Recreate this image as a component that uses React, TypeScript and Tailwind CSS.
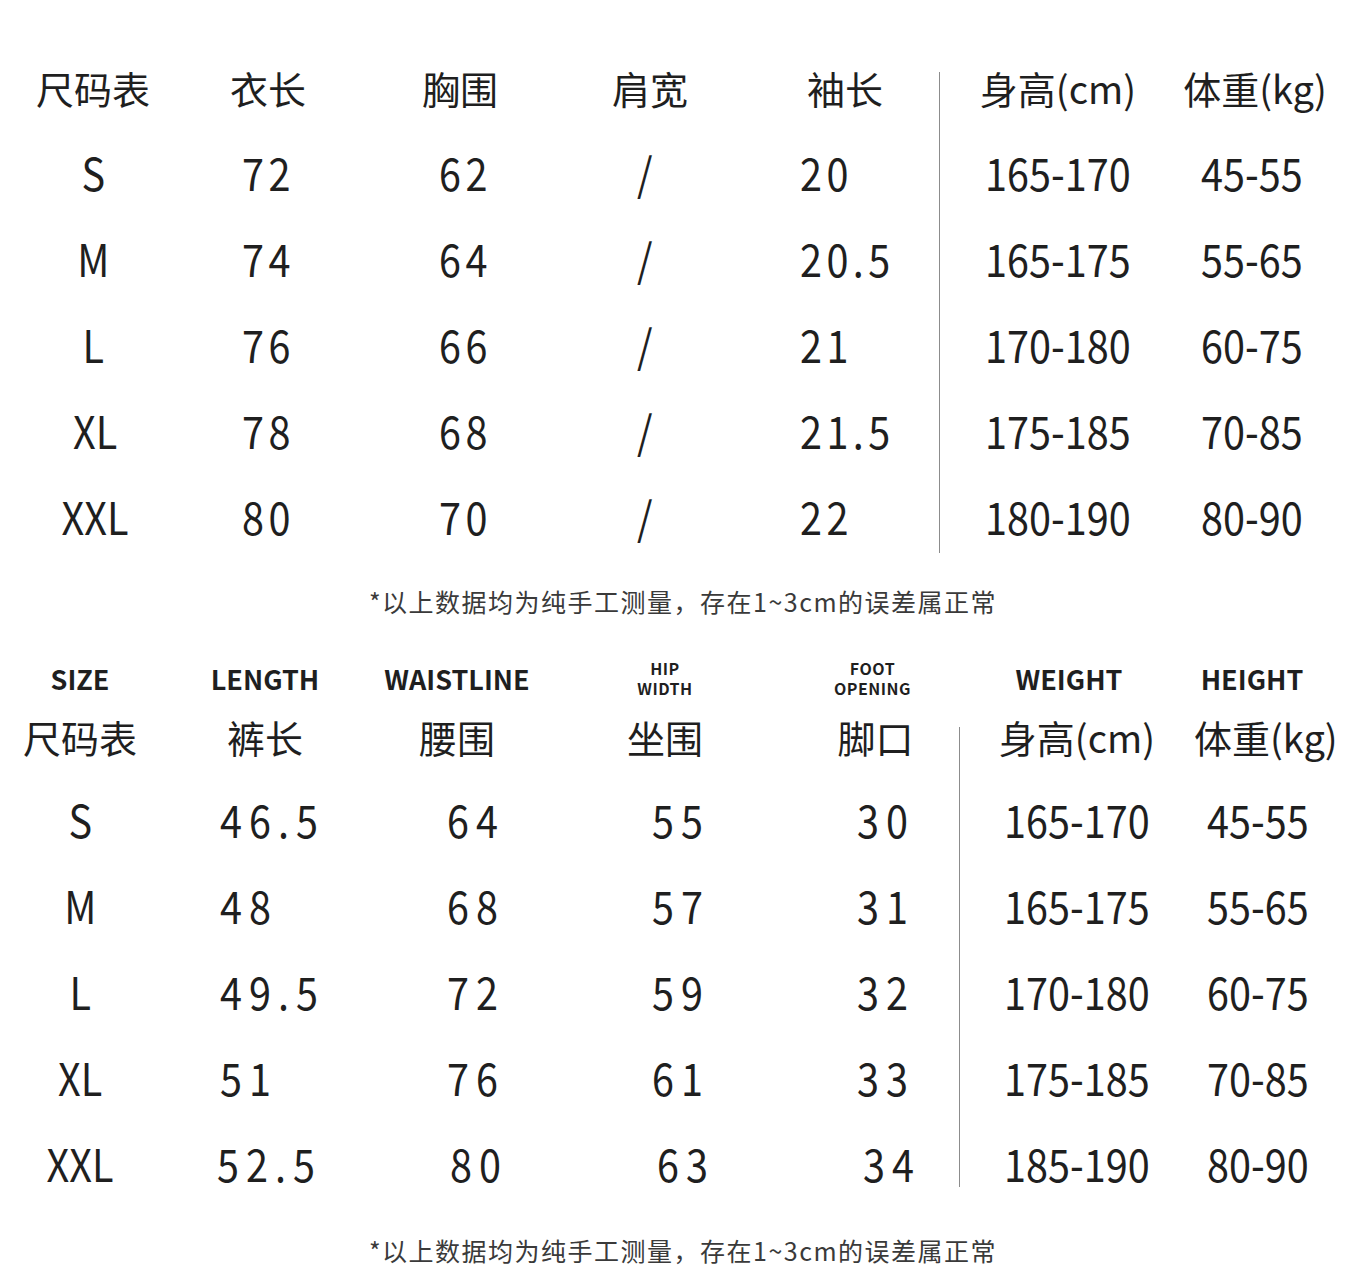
const topRows = [
  ['S', '72', '62', '/', '20', '165-170', '45-55'],
  ['M', '74', '64', '/', '20.5', '165-175', '55-65'],
  ['L', '76', '66', '/', '21', '170-180', '60-75'],
  ['XL', '78', '68', '/', '21.5', '175-185', '70-85'],
  ['XXL', '80', '70', '/', '22', '180-190', '80-90'],
];

const bottomRows = [
  ['S', '46.5', '64', '55', '30', '165-170', '45-55'],
  ['M', '48', '68', '57', '31', '165-175', '55-65'],
  ['L', '49.5', '72', '59', '32', '170-180', '60-75'],
  ['XL', '51', '76', '61', '33', '175-185', '70-85'],
  ['XXL', '52.5', '80', '63', '34', '185-190', '80-90'],
];

// the chart's figures are tall and condensed: squeeze them horizontally
function Fig({ children, center }: { children: string; center?: boolean }) {
  return (
    <span className={`inline-block scale-x-[0.88] ${center ? 'origin-center' : 'origin-left'}`}>
      {children}
    </span>
  );
}

function Note() {
  return (
    <div className="flex h-[40px] items-center justify-center text-[25px] leading-none tracking-[1.5px] text-[#3a3a3a]">
      *以上数据均为纯手工测量，存在1~3cm的误差属正常
    </div>
  );
}

function TopTable() {
  return (
    <div className="flex pt-[48px]">
      {/* left block: size + garment measurements */}
      <div className="w-[939px]">
        <div className="flex h-[80px] items-center text-[38px] leading-none">
          <div className="w-[186px] text-center">尺码表</div>
          <div className="w-[164px] text-center">衣长</div>
          <div className="w-[220px] text-center">胸围</div>
          <div className="w-[160px] text-center">肩宽</div>
          <div className="w-[209px] pl-[21px] text-center">袖长</div>
        </div>
        {topRows.map((r) => (
          <div key={r[0]} className="flex h-[86px] items-center whitespace-nowrap text-[45px] leading-none">
            <div className={`w-[186px] text-center ${r[0].length > 1 ? 'pl-[5px]' : ''}`}><Fig center>{r[0]}</Fig></div>
            <div className="w-[164px] pl-[56px] tracking-[5px]"><Fig>{r[1]}</Fig></div>
            <div className="w-[220px] pl-[89px] tracking-[5px]"><Fig>{r[2]}</Fig></div>
            <div className="w-[160px] pl-[67px]"><Fig>{r[3]}</Fig></div>
            <div className="w-[209px] pl-[70px] tracking-[5px]"><Fig>{r[4]}</Fig></div>
          </div>
        ))}
      </div>
      <div className="mb-[5px] mt-[24px] w-px bg-[#8c8c8c]" />
      {/* right block: body height / weight */}
      <div className="w-[394px]">
        <div className="flex h-[80px] items-center whitespace-nowrap text-[38px] leading-none">
          <div className="w-[236px] text-center">身高(cm)</div>
          <div className="w-[158px] text-center">体重(kg)</div>
        </div>
        {topRows.map((r) => (
          <div key={r[0]} className="flex h-[86px] items-center whitespace-nowrap text-[45px] leading-none">
            <div className="w-[236px] pl-[45px]"><Fig>{r[5]}</Fig></div>
            <div className="w-[158px] pl-[25px]"><Fig>{r[6]}</Fig></div>
          </div>
        ))}
      </div>
    </div>
  );
}

function BottomTable() {
  return (
    <div>
      {/* english labels */}
      <div className="flex h-[62px] items-center font-semibold leading-none">
        <div className="w-[160px] text-center text-[27px]">SIZE</div>
        <div className="w-[210px] text-center text-[27px]">LENGTH</div>
        <div className="w-[174px] text-center text-[27px]">WAISTLINE</div>
        <div className="flex w-[242px] flex-col items-center text-[16px] leading-[20px] tracking-[0.5px]">
          <span>HIP</span>
          <span>WIDTH</span>
        </div>
        <div className="flex w-[173px] flex-col items-center text-[16px] leading-[20px] tracking-[0.5px]">
          <span>FOOT</span>
          <span>OPENING</span>
        </div>
        <div className="w-px" />
        <div className="w-[218px] text-center text-[27px]">WEIGHT</div>
        <div className="w-[148px] text-center text-[27px]">HEIGHT</div>
      </div>

      <div className="flex">
        <div className="w-[959px]">
          <div className="flex h-[56px] items-center text-[38px] leading-none">
            <div className="w-[160px] text-center">尺码表</div>
            <div className="w-[210px] text-center">裤长</div>
            <div className="w-[174px] text-center">腰围</div>
            <div className="w-[242px] text-center">坐围</div>
            <div className="w-[173px] pl-[6px] text-center">脚口</div>
          </div>
          <div className="mt-[10px]">
            {bottomRows.map((r) => {
              const last = r[0] === 'XXL';
              return (
                <div key={r[0]} className="flex h-[86px] items-center whitespace-nowrap text-[45px] leading-none">
                  <div className="w-[160px] text-center"><Fig center>{r[0]}</Fig></div>
                  <div className={`w-[210px] tracking-[8px] ${last ? 'pl-[57px]' : 'pl-[60px]'}`}><Fig>{r[1]}</Fig></div>
                  <div className={`w-[174px] tracking-[8px] ${last ? 'pl-[80px]' : 'pl-[77px]'}`}><Fig>{r[2]}</Fig></div>
                  <div className={`w-[242px] tracking-[8px] ${last ? 'pl-[113px]' : 'pl-[108px]'}`}><Fig>{r[3]}</Fig></div>
                  <div className={`w-[173px] tracking-[8px] ${last ? 'pl-[77px]' : 'pl-[71px]'}`}><Fig>{r[4]}</Fig></div>
                </div>
              );
            })}
          </div>
        </div>
        <div className="mb-[18px] mt-[18px] w-px bg-[#8c8c8c]" />
        <div className="w-[406px]">
          <div className="flex h-[56px] items-center whitespace-nowrap text-[38px] leading-none">
            <div className="w-[234px] text-center">身高(cm)</div>
            <div className="w-[136px] text-center">体重(kg)</div>
          </div>
          <div className="mt-[10px]">
            {bottomRows.map((r) => (
              <div key={r[0]} className="flex h-[86px] items-center whitespace-nowrap text-[45px] leading-none">
                <div className="w-[226px] pl-[44px]"><Fig>{r[5]}</Fig></div>
                <div className="w-[144px] pl-[21px]"><Fig>{r[6]}</Fig></div>
              </div>
            ))}
          </div>
        </div>
      </div>
    </div>
  );
}

export default function App() {
  return (
    <div className="h-[1279px] w-[1366px] overflow-hidden bg-white font-['Noto_Sans_CJK_SC','Noto_Sans',sans-serif] text-[#1f1f1f]">
      <TopTable />
      <div className="mt-[23px]">
        <Note />
      </div>
      <div className="mt-[26px]">
        <BottomTable />
      </div>
      <div className="mt-[25px]">
        <Note />
      </div>
    </div>
  );
}
